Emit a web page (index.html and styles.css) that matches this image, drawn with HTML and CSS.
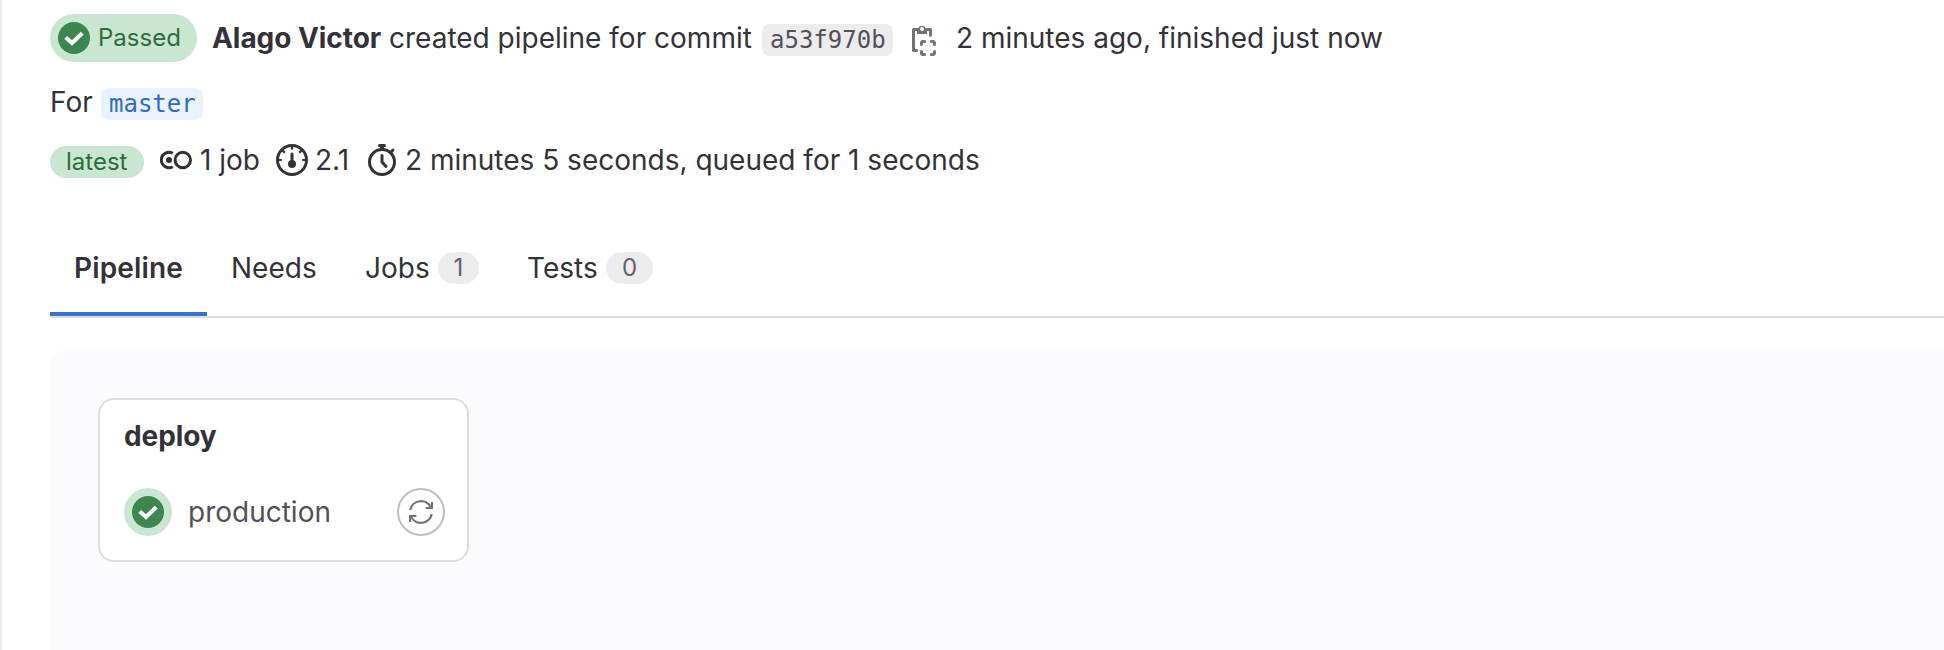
FILE: index.html
```html
<!DOCTYPE html>
<html lang="en">
<head>
<meta charset="utf-8">
<title>Pipeline</title>
<link rel="stylesheet" href="styles.css">
</head>
<body>
<main class="page">
  <header class="summary">
    <span class="status">
      <svg class="icon" viewBox="0 0 16 16"><circle cx="8" cy="8" r="8" fill="#3e8650"/><path d="M4.6 8.4 7 10.5l4.4-4.2" fill="none" stroke="#fff" stroke-width="2" stroke-linecap="square"/></svg>
      <span class="status-text">Passed</span>
    </span>
    <b class="author">Alago Victor</b>
    <span class="created">created pipeline for commit</span>
    <code class="sha">a53f970b</code>
    <svg class="icon copy" viewBox="0 0 16 16" fill="none" stroke="#737278" stroke-width="1.5"><path stroke-linejoin="round" stroke-linecap="round" d="M4.3 13.25H2.75V2.75H5M9 2.75h2.25V5.6"/><path fill="#737278" fill-rule="evenodd" stroke="none" d="M4.5 2h.7a2 2 0 0 1 3.6 0h.7v3h-5zM7 1.5a1 1 0 1 0 0 2 1 1 0 0 0 0-2z"/><path stroke-linecap="round" d="M6.75 10.2v-.7a.75.75 0 0 1 .75-.75h.8M11.7 8.75h.8a.75.75 0 0 1 .75.75v.7M13.25 13.8v.7a.75.75 0 0 1-.75.75h-.8M8.3 15.25h-.8a.75.75 0 0 1-.75-.75v-.7"/></svg>
    <span class="finished">2 minutes ago, finished just now</span>
  </header>
  <div class="ref"><span>For</span><code class="branch">master</code></div>
  <div class="stats">
    <span class="latest"><span>latest</span></span>
    <svg class="icon" viewBox="0 0 16 16" fill="none" stroke="#333238" stroke-width="1.5"><circle cx="11.4" cy="8" r="3.85"/><path d="M6.4 4.65A3.85 3.85 0 1 0 6.4 11.35"/><circle cx="4.5" cy="8" r="1.5" fill="#333238" stroke="none"/></svg>
    <span class="jobs-count">1 job</span>
    <svg class="icon" viewBox="0 0 16 16" fill="none" stroke="#333238" stroke-width="1.5"><circle cx="8" cy="8" r="7.25"/><path stroke-width="1.1" d="M8 1v1.7M1 8h1.9M13.1 8H15M3.2 3.2l1.2 1.2M12.8 3.2l-1.2 1.2"/><path stroke-linecap="round" d="M8 5v5"/><circle cx="8" cy="10" r="2" fill="#333238" stroke="none"/></svg>
    <span class="credits">2.1</span>
    <svg class="icon" viewBox="0 0 16 16" fill="none" stroke="#333238" stroke-width="1.5"><circle cx="8" cy="9" r="6.25"/><path d="M8 5.8V9l2 2.2M12.7 3.8l.8-.8" stroke-linecap="round"/><path d="M6.75.75h2.5" stroke-linecap="round"/><path d="M8 1v2" stroke-width="2"/></svg>
    <span class="duration">2 minutes 5 seconds, queued for 1 seconds</span>
  </div>
  <nav class="tabs">
    <a class="tab active"><span class="t-pipeline">Pipeline</span></a>
    <a class="tab"><span class="t-needs">Needs</span></a>
    <a class="tab"><span class="t-jobs">Jobs</span><span class="badge one">1</span></a>
    <a class="tab"><span class="t-tests">Tests</span><span class="badge zero">0</span></a>
  </nav>
  <section class="graph">
    <article class="stage">
      <h2>deploy</h2>
      <div class="job">
        <span class="job-status"><svg class="icon" viewBox="0 0 16 16"><circle cx="8" cy="8" r="8" fill="#3e8650"/><path d="M4.6 8.4 7 10.5l4.4-4.2" fill="none" stroke="#fff" stroke-width="2" stroke-linecap="square"/></svg></span>
        <span class="job-name">production</span>
        <span class="retry"><svg viewBox="0 0 12 12" fill="none" stroke="#737278" stroke-width="1.1"><path d="M.6 5A5.5 5.5 0 0 1 11 3.8M11.4 7A5.5 5.5 0 0 1 1 8.2"/><path d="M11.5 1v3H8.3M.5 11V8h3.2"/></svg></span>
      </div>
    </article>
  </section>
</main>
</body>
</html>
```
FILE: styles.css
```css
* { box-sizing: border-box; }
body {
  margin: 0;
  background: #fff;
  color: #333238;
  font: 28px/40px Inter, sans-serif;
  white-space: nowrap;
}
.page {
  height: 650px;
  overflow: hidden;
  padding: 14px 0 0 48px;
  border-left: 2px solid #ececef;
  display: flex;
  flex-direction: column;
}
.icon { width: 32px; height: 32px; flex: none; display: block; }
.summary { display: flex; align-items: center; height: 48px; }
.status {
  display: flex; align-items: center; gap: 8px;
  width: 147px; height: 48px; padding-left: 8px;
  border-radius: 24px; background: #c9e6d0; color: #2f6b3b;
  font-size: 24px;
  margin-right: 15px;
}
.author { width: 177px; font-weight: 700; letter-spacing: -0.05px; }
.created { width: 373px; }
code { font-family: "DejaVu Sans Mono", monospace; height: 32px; line-height: 32px; border-radius: 8px; padding: 0 8px; font-size: 24px; }
.sha { background: #ececef; color: #535158; width: 131px; margin-top: 4px; }
.copy { margin: 4px 16px 0 15px; }
.ref { display: flex; align-items: center; margin-top: 20px; height: 40px; }
.ref span { width: 51px; }
.branch { background: #e9f3fc; color: #2f6bc4; margin-top: 4px; width: 102px; }
.stats { display: flex; align-items: center; height: 40px; margin-top: 18px; }
.latest {
  width: 94px; height: 32px; line-height: 32px; margin: 4px 16px 0 0; padding-left: 16px;
  border-radius: 16px; background: #c9e6d0; color: #2f6b3b; font-size: 24px;
}
.jobs-count { margin-left: 8px; width: 76px; }
.credits { margin-left: 7px; width: 51px; }
.duration { margin-left: 7px; }
.tabs { display: flex; height: 98px; margin-top: 40px; border-bottom: 2px solid #dcdcde; flex: none; }
.tab { display: flex; align-items: center; padding: 0 24px; height: 96px; }
.active { width: 157px; font-weight: 600; letter-spacing: 0.15px; border-bottom: 4px solid #3a72c8; padding-top: 4px; }
.badge {
  display: flex; align-items: center; justify-content: center;
  height: 32px; width: 41px; margin-left: 8px; border-radius: 16px;
  background: #ececef; color: #626168; font-size: 24px;
}
.zero { width: 47px; }
.t-needs { width: 86px; }
.t-jobs { width: 65px; }
.t-tests { width: 71px; }
.graph { flex: 1; margin-top: 32px; background: #fbfafd; border-radius: 16px 0 0 0; padding: 48px; }
.stage { width: 371px; height: 164px; border: 2px solid #dcdcde; border-radius: 16px; background: #fff; padding: 16px 22px 0 24px; }
h2 { margin: 0; font: 700 28px/40px Inter, sans-serif; letter-spacing: -0.1px; }
.job { display: flex; align-items: center; height: 48px; margin-top: 32px; }
.job-status { width: 48px; height: 48px; padding: 8px; border-radius: 50%; background: #c9e6d0; }
.job-name { margin-left: 16px; color: #535158; }
.retry { margin-left: auto; width: 48px; height: 48px; border: 2px solid #bfbfc3; border-radius: 50%; padding: 10px; }
.retry svg { display: block; width: 24px; height: 24px; }
```
